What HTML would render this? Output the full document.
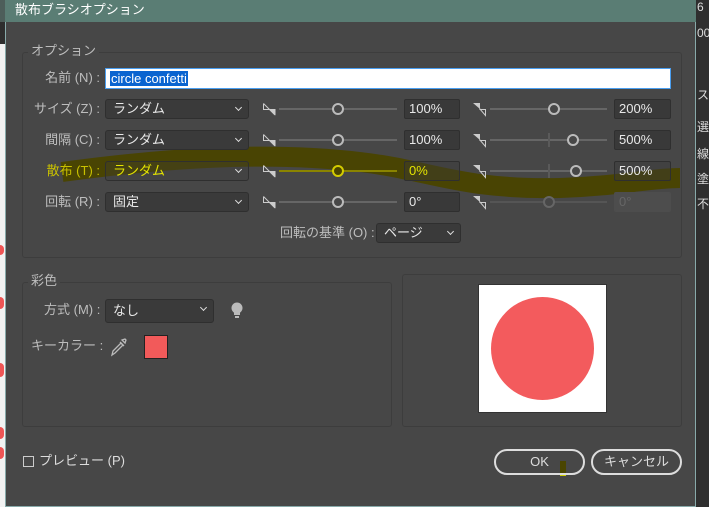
<!DOCTYPE html>
<html><head><meta charset="utf-8"><style>
*{margin:0;padding:0;box-sizing:border-box}
body{width:709px;height:507px;overflow:hidden;background:#2e2e2e;position:relative;font-family:"Liberation Sans","Noto Sans CJK JP",sans-serif;font-size:13px;color:#c8c8c8}
.a{position:absolute}
.lbl{position:absolute;text-align:right;width:100px;left:0;font-size:13px;color:#bdbdbd;line-height:16px}
.dd{position:absolute;background:#3a3a3a;border:1px solid #2f2f2f;border-radius:3px;color:#e8e8e8;padding-left:7px;font-size:13px;line-height:18px}
.dd:after{content:"";position:absolute;right:7px;top:5px;width:4px;height:4px;border-right:1.5px solid #ddd;border-bottom:1.5px solid #ddd;transform:rotate(45deg)}
.vb{position:absolute;background:#393939;border:1px solid #2f2f2f;border-radius:2px;color:#e8e8e8;padding-left:4px;font-size:13px;line-height:18px;height:20px}
.tr{position:absolute;height:2px;background:#666}
.kn{position:absolute;width:12px;height:12px;border:2px solid #bbb;border-radius:50%;background:#474747}
.grp{position:absolute;border:1px solid #3d3d3d;border-radius:3px}
.lg{position:absolute;background:#474747;padding:0 3px;color:#bdbdbd;font-size:13px;line-height:14px}
.btn{position:absolute;border:2px solid #ddd;border-radius:13px;color:#ddd;text-align:center;line-height:21px;font-size:13px}
</style></head><body>
<div class="a" style="left:0;top:0;width:696px;height:22px;background:#5a7d74"></div>
<div class="a" style="left:0;top:0;width:5px;height:22px;background:#4d5e5a"></div>
<div class="a" style="left:15px;top:2px;color:#fff;font-size:13px;line-height:16px">散布ブラシオプション</div>
<div class="a" style="left:0;top:44px;width:5px;height:463px;background:#f2f2f2"></div>
<div class="a" style="left:0;top:245px;width:4px;height:10px;border-radius:0 5px 5px 0;background:#e55"></div>
<div class="a" style="left:0;top:297px;width:4px;height:12px;border-radius:0 6px 6px 0;background:#e55"></div>
<div class="a" style="left:0;top:363px;width:4px;height:14px;border-radius:0 6px 6px 0;background:#e55"></div>
<div class="a" style="left:0;top:427px;width:4px;height:12px;border-radius:0 6px 6px 0;background:#e55"></div>
<div class="a" style="left:0;top:447px;width:4px;height:12px;border-radius:0 6px 6px 0;background:#e55"></div>
<div class="a" style="left:5px;top:22px;width:691px;height:485px;background:#474747;border-left:1px solid #8aa;border-right:1px solid #8aa;border-bottom:1px solid #8aa"></div>
<div class="a" style="left:697px;top:0;width:12px;height:507px;background:#2f2f2f;color:#ddd;font-size:12px;line-height:14px">
<div class="a" style="top:0;left:0">6</div><div class="a" style="top:26px;left:0">00</div>
<div class="a" style="top:88px;left:0">ス</div><div class="a" style="top:120px;left:0">選</div>
<div class="a" style="top:147px;left:0">線</div><div class="a" style="top:172px;left:0">塗</div><div class="a" style="top:197px;left:0">不</div></div>

<div class="grp" style="left:22px;top:52px;width:660px;height:206px"></div>
<div class="lg" style="left:28px;top:44px">オプション</div>
<div class="lbl" style="top:70px">名前 (N) :</div>
<div class="a" style="left:105px;top:68px;width:566px;height:21px;background:#fff;border:1px solid #4a9ef0"></div>
<div class="a" style="left:110px;top:71px;background:#0a64d0;color:#fff;line-height:15px;padding:0 1px">circle confetti</div>

<svg class="a" style="left:0;top:0" width="709" height="507">
<path d="M62,172 C150,160 260,150 360,162 C430,170 460,190 560,188 C620,186 650,178 680,178" stroke="#4a4500" stroke-width="20" fill="none" opacity=".95"/>
<rect x="560" y="461" width="6" height="15" fill="#4a4500"/><rect x="560" y="473" width="6" height="3" fill="#cc0"/>
</svg>

<div class="lbl" style="top:101px">サイズ (Z) :</div>
<div class="lbl" style="top:132px">間隔 (C) :</div>
<div class="lbl" style="top:163px;color:#c9c100">散布 (T) :</div>
<div class="lbl" style="top:194px">回転 (R) :</div>
<div class="dd" style="left:105px;top:99px;width:144px;height:20px">ランダム</div>
<div class="dd" style="left:105px;top:130px;width:144px;height:20px">ランダム</div>
<div class="dd" style="left:105px;top:161px;width:144px;height:20px;color:#e4e400;background:rgba(58,58,58,.3)">ランダム</div>
<div class="dd" style="left:105px;top:192px;width:144px;height:20px">固定</div>

<svg class="a" style="left:0;top:0" width="709" height="507" fill="none">
<defs>
<g id="i1"><path d="M0.5,0.5 V6.5 H6.5 M0.5,0.5 L12,12" stroke="#ccc" stroke-width="1"/><path d="M6,6 L12.5,6 L12.5,12.5Z" fill="#ccc"/></g>
<g id="i2"><path d="M0,0 L7,0 L7,6Z" fill="#ccc"/><path d="M6.5,5.5 L12.5,12.5 V6.5 H6.5" stroke="#ccc" stroke-width="1"/></g>
</defs>
<use href="#i1" x="263" y="103"/><use href="#i1" x="263" y="134"/><use href="#i1" x="263" y="165"/><use href="#i1" x="263" y="196"/>
<use href="#i2" x="473" y="103"/><use href="#i2" x="473" y="134"/><use href="#i2" x="473" y="165"/><use href="#i2" x="473" y="196"/>
</svg>

<div class="tr" style="left:279px;top:108px;width:118px"></div>
<div class="tr" style="left:279px;top:139px;width:118px"></div>
<div class="tr" style="left:279px;top:170px;width:118px;background:#8a8400"></div>
<div class="tr" style="left:279px;top:201px;width:118px"></div>
<div class="kn" style="left:332px;top:103px"></div>
<div class="kn" style="left:332px;top:134px"></div>
<div class="kn" style="left:332px;top:165px;border-color:#d4cc00;background:#4a4500"></div>
<div class="kn" style="left:332px;top:196px"></div>
<div class="vb" style="left:404px;top:99px;width:56px">100%</div>
<div class="vb" style="left:404px;top:130px;width:56px">100%</div>
<div class="vb" style="left:404px;top:161px;width:56px;color:#e4e400;background:rgba(57,57,57,.4)">0%</div>
<div class="vb" style="left:404px;top:192px;width:56px">0°</div>

<div class="tr" style="left:490px;top:108px;width:117px"></div>
<div class="tr" style="left:490px;top:139px;width:117px"></div>
<div class="tr" style="left:490px;top:170px;width:117px"></div>
<div class="tr" style="left:490px;top:201px;width:117px;background:#555"></div>
<div class="a" style="left:548px;top:133px;width:2px;height:14px;background:#5a5a5a"></div>
<div class="a" style="left:548px;top:164px;width:2px;height:14px;background:#5a5a5a"></div>
<div class="kn" style="left:548px;top:103px"></div>
<div class="kn" style="left:567px;top:134px"></div>
<div class="kn" style="left:570px;top:165px"></div>
<div class="kn" style="left:543px;top:196px;border-color:#666"></div>
<div class="vb" style="left:614px;top:99px;width:57px">200%</div>
<div class="vb" style="left:614px;top:130px;width:57px">500%</div>
<div class="vb" style="left:614px;top:161px;width:57px;background:rgba(57,57,57,.4)">500%</div>
<div class="vb" style="left:614px;top:192px;width:57px;background:#4d4d4d;border-color:#4d4d4d;color:#666">0°</div>

<div class="a" style="left:280px;top:225px;color:#bdbdbd;line-height:16px">回転の基準 (O) :</div>
<div class="dd" style="left:376px;top:223px;width:85px;height:20px">ページ</div>

<div class="grp" style="left:22px;top:282px;width:370px;height:145px"></div>
<div class="lg" style="left:28px;top:274px">彩色</div>
<div class="a" style="left:44px;top:302px;color:#bdbdbd;line-height:16px">方式 (M) :</div>
<div class="dd" style="left:105px;top:299px;width:109px;height:24px;line-height:22px">なし</div>
<svg class="a" style="left:231px;top:302px" width="12" height="17"><circle cx="6" cy="6" r="5.5" fill="#bbb"/><rect x="3" y="9" width="6" height="4" fill="#bbb"/><rect x="4" y="14" width="4" height="2" fill="#bbb"/></svg>
<div class="a" style="left:31px;top:338px;color:#bdbdbd;line-height:16px">キーカラー :</div>
<svg class="a" style="left:110px;top:337px" width="18" height="20" fill="none" stroke="#bbb" stroke-width="1.3"><path d="M2,18 L3,14 L11,6 L13,8 L5,16Z"/><path d="M10,5 L14,9 M12,3 L15,6 L16,3 L15,2Z"/></svg>
<div class="a" style="left:144px;top:335px;width:24px;height:24px;background:#f25a5a;border:1px solid #222"></div>

<div class="grp" style="left:402px;top:274px;width:280px;height:153px"></div>
<div class="a" style="left:478px;top:284px;width:129px;height:129px;background:#fff;border:1px solid #333"></div>
<div class="a" style="left:491px;top:297px;width:103px;height:103px;border-radius:50%;background:#f35b5d"></div>

<div class="a" style="left:23px;top:456px;width:11px;height:11px;border:1px solid #ccc"></div>
<div class="a" style="left:39px;top:453px;color:#ddd;line-height:16px">プレビュー (P)</div>
<div class="btn" style="left:494px;top:449px;width:91px;height:26px">OK</div>
<div class="btn" style="left:591px;top:449px;width:91px;height:26px">キャンセル</div>
</body></html>
